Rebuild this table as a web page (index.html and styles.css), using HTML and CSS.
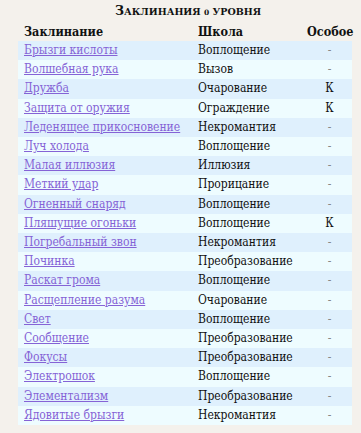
FILE: index.html
```html
<!DOCTYPE html>
<html lang="ru">
<head>
<meta charset="utf-8">
<link rel="stylesheet" href="styles.css">
</head>
<body>
<div class="page">
  <h3 class="title">Заклинания <span class="num">0</span> уровня</h3>
  <table class="spells">
    <thead>
      <tr><th class="c-name">Заклинание</th><th class="c-school">Школа</th><th class="c-special">Особое</th></tr>
    </thead>
    <tbody>
      <tr><td><a href="#">Брызги кислоты</a></td><td>Воплощение</td><td class="c-special dash">-</td></tr>
      <tr><td><a href="#">Волшебная рука</a></td><td>Вызов</td><td class="c-special dash">-</td></tr>
      <tr><td><a href="#">Дружба</a></td><td>Очарование</td><td class="c-special">К</td></tr>
      <tr><td><a href="#">Защита от оружия</a></td><td>Ограждение</td><td class="c-special">К</td></tr>
      <tr><td><a href="#">Леденящее прикосновение</a></td><td>Некромантия</td><td class="c-special dash">-</td></tr>
      <tr><td><a href="#">Луч холода</a></td><td>Воплощение</td><td class="c-special dash">-</td></tr>
      <tr><td><a href="#">Малая иллюзия</a></td><td>Иллюзия</td><td class="c-special dash">-</td></tr>
      <tr><td><a href="#">Меткий удар</a></td><td>Прорицание</td><td class="c-special dash">-</td></tr>
      <tr><td><a href="#">Огненный снаряд</a></td><td>Воплощение</td><td class="c-special dash">-</td></tr>
      <tr><td><a href="#">Пляшущие огоньки</a></td><td>Воплощение</td><td class="c-special">К</td></tr>
      <tr><td><a href="#">Погребальный звон</a></td><td>Некромантия</td><td class="c-special dash">-</td></tr>
      <tr><td><a href="#">Починка</a></td><td>Преобразование</td><td class="c-special dash">-</td></tr>
      <tr><td><a href="#">Раскат грома</a></td><td>Воплощение</td><td class="c-special dash">-</td></tr>
      <tr><td><a href="#">Расщепление разума</a></td><td>Очарование</td><td class="c-special dash">-</td></tr>
      <tr><td><a href="#">Свет</a></td><td>Воплощение</td><td class="c-special dash">-</td></tr>
      <tr><td><a href="#">Сообщение</a></td><td>Преобразование</td><td class="c-special dash">-</td></tr>
      <tr><td><a href="#">Фокусы</a></td><td>Преобразование</td><td class="c-special dash">-</td></tr>
      <tr><td><a href="#">Электрошок</a></td><td>Воплощение</td><td class="c-special dash">-</td></tr>
      <tr><td><a href="#">Элементализм</a></td><td>Преобразование</td><td class="c-special dash">-</td></tr>
      <tr><td><a href="#">Ядовитые брызги</a></td><td>Некромантия</td><td class="c-special dash">-</td></tr>
    </tbody>
  </table>
</div>
</body>
</html>
```

FILE: styles.css
```css
html, body {
  margin: 0;
  padding: 0;
}
body {
  background: #f4f1ec;
  font-family: "DejaVu Serif Condensed", "DejaVu Serif", "Liberation Serif", serif;
  font-stretch: condensed;
  color: #111;
  width: 361px;
  height: 433px;
  overflow: hidden;
}
.page {
  padding: 2px 9px 0 18px;
}
.title {
  margin: 0 0 0 6px;
  text-align: center;
  font-family: "DejaVu Serif", serif;
  font-stretch: normal;
  font-size: 9.5px;
  font-weight: bold;
  text-transform: uppercase;
  line-height: 18px;
  color: #111;
}
.title::first-letter {
  font-size: 12.5px;
}
.title .num {
  display: inline-block;
  font-size: 7.5px;
}
.spells {
  width: 334px;
  table-layout: fixed;
  border-collapse: collapse;
  font-size: 12px;
}
.spells th {
  text-align: left;
  font-weight: bold;
  font-size: 12.5px;
  line-height: 19px;
  height: 19px;
  padding: 0 0 0 6px;
  white-space: nowrap;
}
.spells td {
  line-height: 19.2px;
  height: 19.2px;
  padding: 0 0 0 6px;
  white-space: nowrap;
}
.spells th.c-special,
.spells td.c-special {
  text-align: center;
  padding: 0;
}
.c-name { width: 168px; }
.c-school { width: 109px; }
.spells tbody tr:nth-child(odd) { background: #dff0fd; }
.spells tbody tr:nth-child(even) { background: #eefcff; }
.spells a {
  color: #8563d6;
  text-decoration: underline;
}
.dash {
  color: #888;
}
```
